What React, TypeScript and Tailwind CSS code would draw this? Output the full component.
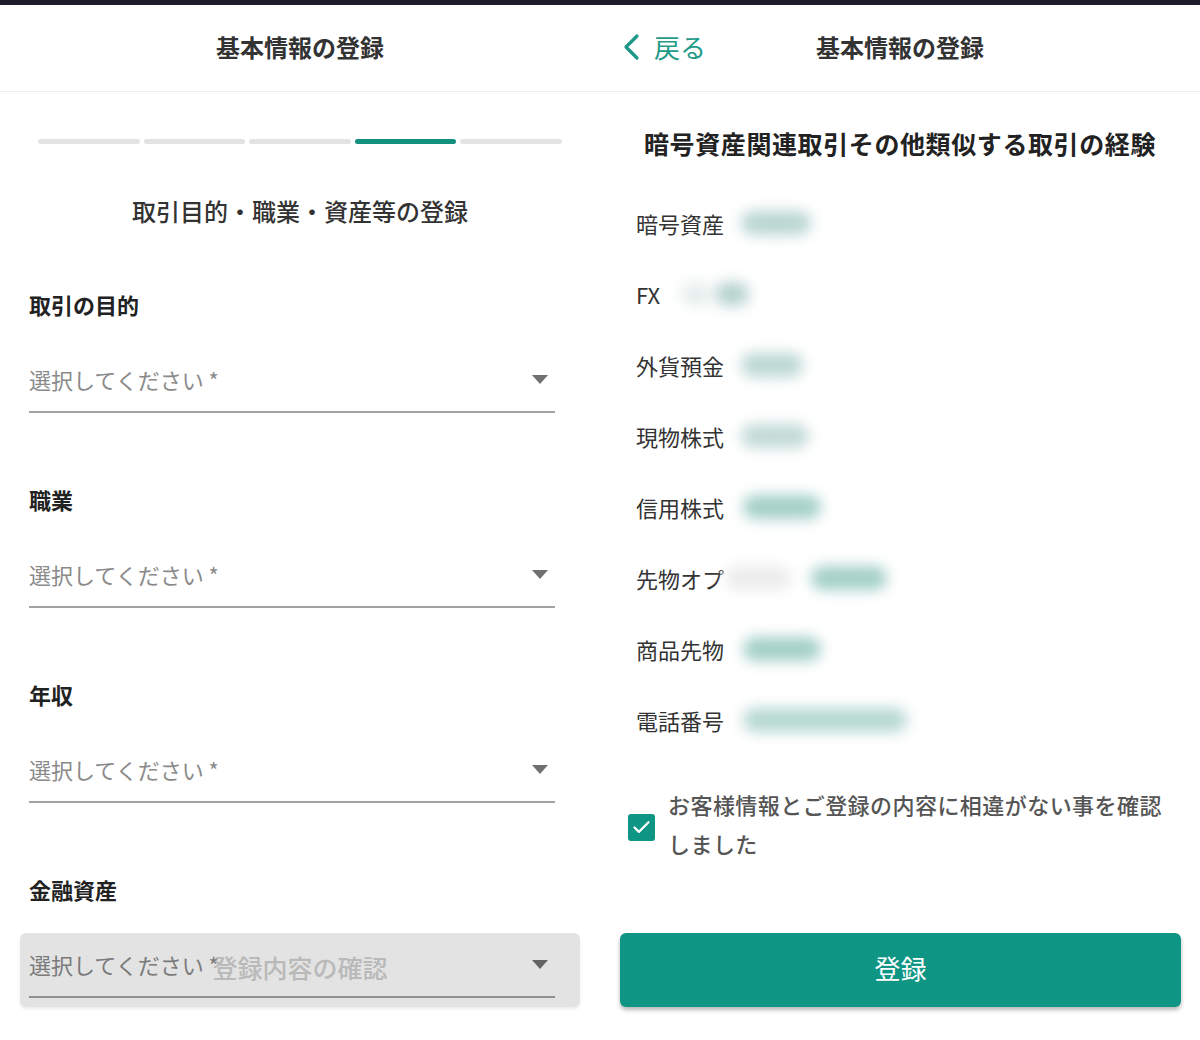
import { Check } from "lucide-react";

const TEAL = "bg-[#0f9584]";

// blurred values, x offsets measured from the value column start
type Blob = { ml: number; w: number; c: string };

const rows: { label: string; blobs: Blob[] }[] = [
  { label: "暗号資産", blobs: [{ ml: -4, w: 70, c: "#b9d5d1" }] },
  { label: "FX", blobs: [{ ml: -64, w: 30, c: "#e6eeed" }, { ml: 4, w: 34, c: "#b7d2ce" }] },
  { label: "外貨預金", blobs: [{ ml: -4, w: 62, c: "#bcd7d3" }] },
  { label: "現物株式", blobs: [{ ml: -4, w: 68, c: "#c2dad6" }] },
  { label: "信用株式", blobs: [{ ml: -2, w: 78, c: "#a3cfc7" }] },
  { label: "先物オプ", blobs: [{ ml: -20, w: 66, c: "#ececec" }, { ml: 20, w: 76, c: "#a3cfc7" }] },
  { label: "商品先物", blobs: [{ ml: -2, w: 78, c: "#a3cfc7" }] },
  { label: "電話番号", blobs: [{ ml: -2, w: 164, c: "#b6d8d1" }] },
];

function Caret() {
  return (
    <svg width="16" height="9" viewBox="0 0 16 9" className="mr-[7px]">
      <polygon points="0,0 16,0 8,9" fill="#707070" />
    </svg>
  );
}

function SelectField({ label, first }: { label: string; first?: boolean }) {
  return (
    <div className={first ? "mt-[62px]" : "mt-[71px]"}>
      <div className="text-[22px] leading-[30px] font-bold text-[#222]">{label}</div>
      <div className="mt-[45px] flex items-center justify-between border-b-2 border-[#a2a2a2] pb-[17px]">
        <span className="text-[22px] leading-[30px] text-[#8a8a8a]">選択してください *</span>
        <Caret />
      </div>
    </div>
  );
}

function Header({ back }: { back?: boolean }) {
  return (
    <div className="relative h-[87px] border-b border-[#ececec] flex items-center justify-center pb-[2px]">
      {back && (
        <div className="absolute left-[22px] top-0 h-full pb-[2px] flex items-center gap-[14px] text-[#1f9b89]">
          <svg width="18" height="28" viewBox="0 0 18 28">
            <polyline points="15,3 4,14 15,25" fill="none" stroke="#1a9785" strokeWidth="3.2" strokeLinecap="round" strokeLinejoin="round" />
          </svg>
          <span className="text-[26px] leading-[32px]">戻る</span>
        </div>
      )}
      <span className="text-[24px] leading-[32px] font-bold text-[#333]">基本情報の登録</span>
    </div>
  );
}

function LeftPanel() {
  return (
    <div className="relative w-[600px] h-full">
      <Header />
      <div className="px-[38px] mt-[47px] flex gap-[4px]">
        {[0, 1, 2, 3, 4].map((i) => (
          <div
            key={i}
            className={i === 3 ? "flex-1 h-[5px] rounded-full bg-[#13917f]" : "flex-1 h-[5px] rounded-full bg-[#e3e3e3]"}
          />
        ))}
      </div>
      <div className="mt-[51px] text-center text-[24px] leading-[32px] font-medium text-[#333]">
        取引目的・職業・資産等の登録
      </div>
      <div className="pl-[29px] pr-[45px]">
        <SelectField label="取引の目的" first />
        <SelectField label="職業" />
        <SelectField label="年収" />
        <SelectField label="金融資産" />
      </div>

      {/* disabled confirm button sliding underneath */}
      <div className="absolute left-[20px] top-[928px] w-[560px] h-[74px] rounded-[6px] bg-black/[0.11] shadow-[0_2px_3px_rgba(0,0,0,0.08)] flex items-center justify-center pb-[4px]">
        <span className="text-[25px] text-[#b9b9b9] font-medium">登録内容の確認</span>
      </div>
    </div>
  );
}

function RightPanel() {
  return (
    <div className="w-[600px] h-full">
      <Header back />
      <div className="mt-[35px] text-center text-[25px] leading-[32px] font-bold text-[#222] tracking-[0.6px]">
        暗号資産関連取引その他類似する取引の経験
      </div>
      <div className="mt-[28px] pl-[36px]">
        {rows.map((r) => (
          <div key={r.label} className="h-[71px] flex items-center">
            <span className="w-[109px] shrink-0 text-[22px] leading-[30px] text-[#333]">{r.label}</span>
            {r.blobs.map((b, i) => (
              <div
                key={i}
                className="h-[24px] rounded-full blur-[7px]"
                style={{ marginLeft: b.ml, width: b.w, backgroundColor: b.c }}
              />
            ))}
          </div>
        ))}
      </div>
      <div className="mt-[30px] pl-[28px] pr-[28px] flex items-center gap-[13px]">
        <div className={`${TEAL} mt-[6px] w-[27px] h-[27px] rounded-[3px] shrink-0 flex items-center justify-center`}>
          <Check size={21} color="white" strokeWidth={2.5} />
        </div>
        <p className="text-[22px] leading-[39px] font-medium text-[#555] tracking-[0.45px]">
          お客様情報とご登録の内容に相違がない事を確認しました
        </p>
      </div>
      <div className="mt-[70px] pl-[20px] pr-[19px]">
        <div className={`${TEAL} h-[74px] rounded-[6px] shadow-[0_3px_4px_rgba(0,0,0,0.28)] flex items-center justify-center pb-[6px]`}>
          <span className="text-[26px] text-white">登録</span>
        </div>
      </div>
    </div>
  );
}

export default function App() {
  return (
    <div className="w-[1200px] h-[1040px] overflow-hidden bg-white font-['Noto_Sans_CJK_JP','Noto_Sans',sans-serif]">
      <div className="h-[5px] bg-[#1c1c2a]" />
      <div className="flex h-[1035px]">
        <LeftPanel />
        <RightPanel />
      </div>
    </div>
  );
}
